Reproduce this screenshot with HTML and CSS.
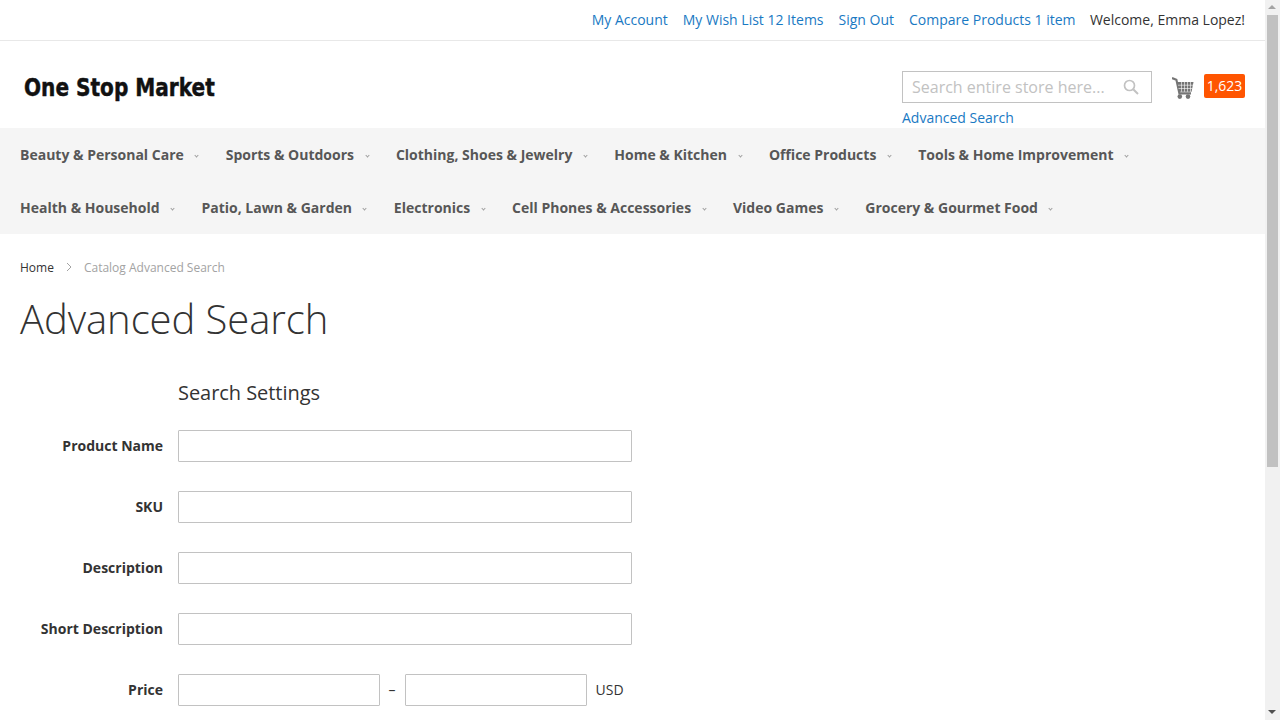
FILE: index.html
```html
<!DOCTYPE html>
<html lang="en">
<head>
<meta charset="utf-8">
<title>Advanced Search</title>
<link rel="stylesheet" href="styles.css">
</head>
<body>
<div class="viewport">
  <div class="page">
    <div class="topbar">
      <a href="#">My Account</a>
      <a href="#">My Wish List 12 Items</a>
      <a href="#">Sign Out</a>
      <a href="#">Compare Products 1 item</a>
      <span class="welcome">Welcome, Emma Lopez!</span>
    </div>
    <header class="header">
      <div class="logo">One Stop Market</div>
      <div class="tools">
        <div class="search-col">
          <div class="searchbox">
            <span class="placeholder">Search entire store here...</span>
            <svg class="search-icon" width="16" height="16" viewBox="0 0 16 16"><circle cx="6.5" cy="6.5" r="5" fill="none" stroke="#c2c2c2" stroke-width="1.7"/><path d="M10.2 10.2 15 15" stroke="#c2c2c2" stroke-width="2"/></svg>
          </div>
          <a class="adv" href="#">Advanced Search</a>
        </div>
        <div class="cart">
          <svg width="22" height="22" viewBox="0 0 22 22"><path d="M0 1 4.4 2.8 7.4 16.4H19" fill="none" stroke="#757575" stroke-width="2.1"/><path d="M5 5H21.5L19.6 14.8H7.2Z" fill="#757575"/><path d="M6 8.2H21M6.5 11.5H20.5M9.5 5V14.8M12.5 5V14.8M15.5 5V14.8M18.5 5V14.8" stroke="#fff" stroke-width=".6"/><circle cx="7.8" cy="19.6" r="2.3" fill="#757575"/><circle cx="16" cy="19.6" r="2.3" fill="#757575"/></svg>
          <span class="badge">1,623</span>
        </div>
      </div>
    </header>
    <nav class="nav">
      <div class="nav-row">
        <a class="nav-item" href="#">Beauty &amp; Personal Care<i class="chev"></i></a>
        <a class="nav-item" href="#">Sports &amp; Outdoors<i class="chev"></i></a>
        <a class="nav-item" href="#">Clothing, Shoes &amp; Jewelry<i class="chev"></i></a>
        <a class="nav-item" href="#">Home &amp; Kitchen<i class="chev"></i></a>
        <a class="nav-item" href="#">Office Products<i class="chev"></i></a>
        <a class="nav-item" href="#">Tools &amp; Home Improvement<i class="chev"></i></a>
      </div>
      <div class="nav-row">
        <a class="nav-item" href="#">Health &amp; Household<i class="chev"></i></a>
        <a class="nav-item" href="#">Patio, Lawn &amp; Garden<i class="chev"></i></a>
        <a class="nav-item" href="#">Electronics<i class="chev"></i></a>
        <a class="nav-item" href="#">Cell Phones &amp; Accessories<i class="chev"></i></a>
        <a class="nav-item" href="#">Video Games<i class="chev"></i></a>
        <a class="nav-item" href="#">Grocery &amp; Gourmet Food<i class="chev"></i></a>
      </div>
    </nav>
    <main class="main">
      <div class="crumbs">
        <a href="#">Home</a>
        <svg width="6" height="10" viewBox="0 0 6 10"><path d="M1 1 5 5 1 9" fill="none" stroke="#a3a3a3" stroke-width="1"/></svg>
        <span>Catalog Advanced Search</span>
      </div>
      <h1 class="title">Advanced Search</h1>
      <form class="form">
        <div class="legend">Search Settings</div>
        <div class="field"><label>Product Name</label><div class="control"><input class="input" type="text"></div></div>
        <div class="field"><label>SKU</label><div class="control"><input class="input" type="text"></div></div>
        <div class="field"><label>Description</label><div class="control"><input class="input" type="text"></div></div>
        <div class="field"><label>Short Description</label><div class="control"><input class="input" type="text"></div></div>
        <div class="field"><label>Price</label><div class="control price"><input class="input from" type="text"><span class="dash">–</span><input class="input to" type="text"><span class="usd">USD</span></div></div>
      </form>
    </main>
  </div>
  <div class="scrollbar">
    <span class="arrow up"></span>
    <div class="track"><div class="thumb"></div></div>
    <span class="arrow down"></span>
  </div>
</div>
</body>
</html>
```
FILE: styles.css
```css
* { box-sizing: border-box; }
html, body { margin: 0; padding: 0; background: #fff; overflow: hidden; }
body { font-family: "Open Sans", sans-serif; font-size: 14px; color: #333; }
a { color: #1979c3; text-decoration: none; }
.viewport { display: flex; width: 1280px; height: 720px; }
.page { flex: 1; min-width: 0; overflow: hidden; }
.topbar { display: flex; justify-content: flex-end; align-items: center; gap: 15px; height: 41px; padding: 0 20px 1px; border-bottom: 1px solid #e8e8e8; line-height: 20px; }
.welcome { margin-left: -.6px; }
.header { display: flex; justify-content: space-between; height: 87px; padding: 30px 20px 0 24px; }
.logo { font-family: "DejaVu Sans", sans-serif; font-weight: 700; font-size: 25px; line-height: 34px; color: #111; white-space: nowrap; transform: scaleX(.804); transform-origin: left center; -webkit-text-stroke: .5px #111; }
.tools { display: flex; gap: 20px; }
.search-col { display: flex; flex-direction: column; width: 250px; }
.searchbox { display: flex; align-items: center; justify-content: space-between; height: 32px; padding: 0 12px 0 9px; border: 1px solid #c2c2c2; }
.placeholder { font-size: 16px; color: #c2c2c2; }
.search-icon { display: block; }
.adv { margin-top: 5px; line-height: 20px; }
.cart { display: flex; align-items: flex-start; gap: 10px; padding-top: 3px; }
.cart svg { margin-top: 3px; }
.badge { display: block; width: 41px; height: 24px; line-height: 24px; text-align: center; color: #fff; background: #ff5501; border-radius: 2px; }
.nav { background: #f5f5f5; height: 106px; padding-left: 20px; }
.nav-row { display: flex; height: 53px; align-items: center; gap: 27.4px; }
.nav-item { display: flex; align-items: center; font-weight: 700; color: #575757; line-height: 20px; }
.chev { display: block; width: 3px; height: 3px; margin: 1px 0 0 11.5px; border-right: 1px solid #a0a0a0; border-bottom: 1px solid #a0a0a0; transform: rotate(45deg); }
.main { padding: 0 20px; }
.crumbs { display: flex; align-items: center; gap: 12px; height: 20px; margin-top: 23px; font-size: 12px; color: #a3a3a3; }
.crumbs a { color: #333; }
.title { margin: 17px 0 0; font-size: 40px; font-weight: 300; line-height: 50px; color: #333; letter-spacing: -.07px; }
.legend { margin: 34px 0 0 158px; font-size: 20px; font-weight: 400; line-height: 30px; color: #333; letter-spacing: -.05px; }
.field { display: flex; align-items: center; height: 32px; margin-top: 29px; }
.legend + .field { margin-top: 22px; }
.field label { width: 143px; margin-right: 15px; padding-bottom: 2px; text-align: right; font-weight: 700; }
.control { width: 454px; display: flex; align-items: center; }
.input { display: block; width: 100%; height: 32px; margin: 0; padding: 0 9px; border: 1px solid #c2c2c2; border-radius: 1px; background: #fff; font: inherit; }
.input.from { width: 202px; }
.input.to { width: 182px; }
.dash { width: 25px; padding: 0 0 2px; text-align: center; padding-right: 1px; }
.usd { margin-left: 8.6px; padding-bottom: 2px; }
.scrollbar { display: flex; flex-direction: column; width: 15px; background: #f1f1f1; }
.arrow { display: block; height: 15px; flex: none; position: relative; }
.arrow::after { content: ""; position: absolute; left: 3px; top: 5px; border-left: 4px solid transparent; border-right: 4px solid transparent; }
.arrow.up::after { border-bottom: 4px solid #a3a3a3; }
.arrow.down::after { border-top: 4px solid #505050; }
.track { flex: 1; padding: 0 2px; }
.thumb { height: 452px; background: #c1c1c1; }
```
